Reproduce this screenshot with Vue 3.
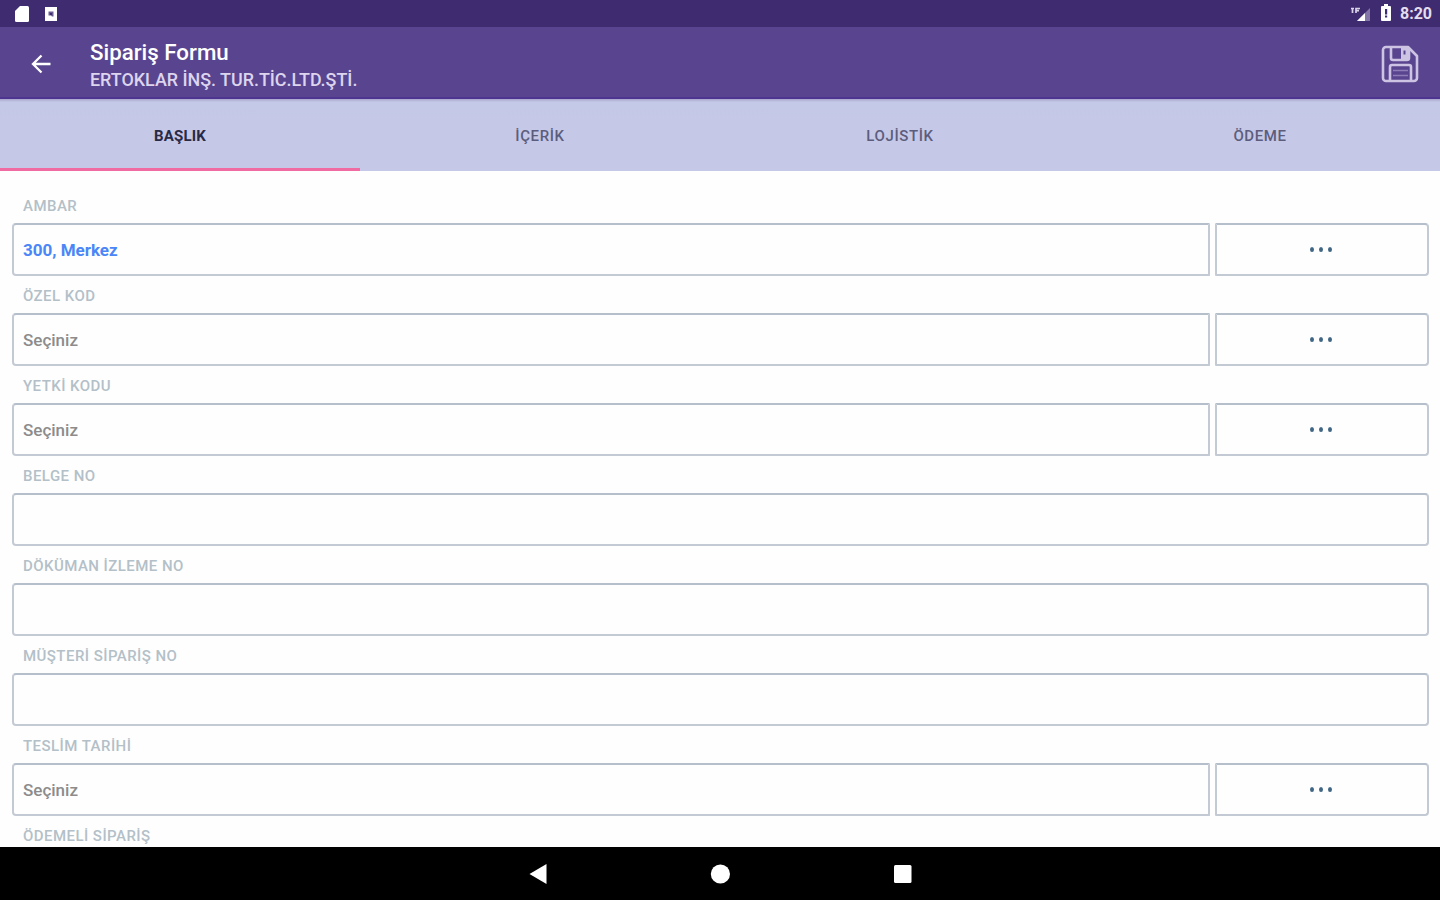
<template>
  <div class="screen">
    <div class="statusbar">
      <div class="status-left">
        <svg width="16" height="18" viewBox="0 0 16 18">
          <path d="M6 1h7.5a1.5 1.5 0 0 1 1.500 1.500v13a1.500 1.500 0 0 1-1.500 1.500h-11A1.500 1.500 0 0 1 1 15.500V6z" fill="#fff" />
        </svg>
        <svg width="14" height="18" viewBox="0 0 14 18">
          <path d="M1 2h12v14H1z" fill="#fff" />
          <path d="M4.500 6.500h5v5H8L7 10.500H4.500z" fill="#6b5c90" />
          <path d="M6 8h2v2H6z" fill="#3f2c70" />
        </svg>
      </div>
      <div class="status-right">
        <svg width="22" height="18" viewBox="0 0 22 18">
          <path d="M20 3v13H7z" fill="#8475a8" />
          <path d="M15 8v8H7z" fill="#fff" />
          <path d="M1 3.500h3M2.500 3.500V8M6 8V3.500h4M6 5.700h3" stroke="#d9d3e8" stroke-width="1.700" fill="none" />
        </svg>
        <svg class="battery" width="12" height="20" viewBox="0 0 12 20">
          <path d="M4 1h4v2h2a1 1 0 0 1 1 1v13a1 1 0 0 1-1 1H2a1 1 0 0 1-1-1V4a1 1 0 0 1 1-1h2z" fill="#fff" />
          <path d="M5 6h2.200v5.500H5zM5 12.500h2.200v2H5z" fill="#3f2c70" />
        </svg>
        <span class="clock">8:20</span>
      </div>
    </div>

    <header class="toolbar">
      <svg class="back" width="22" height="22" viewBox="0 0 22 22">
        <path d="M20.500 11H4M11.500 2.500L3 11l8.500 8.500" stroke="#fff" stroke-width="2.300" fill="none" />
      </svg>
      <div class="titles">
        <h1>Sipariş Formu</h1>
        <h2>ERTOKLAR İNŞ. TUR.TİC.LTD.ŞTİ.</h2>
      </div>
      <svg class="save" width="38" height="38" viewBox="0 0 38 38">
        <g fill="none" stroke="#cdc4e4" stroke-width="2.600" stroke-linejoin="round">
          <path d="M5 2h22l9 9v22a3 3 0 0 1-3 3H5a3 3 0 0 1-3-3V5a3 3 0 0 1 3-3z" />
          <path d="M10 3v10a2 2 0 0 0 2 2h14a2 2 0 0 0 2-2V3" />
          <path d="M9 35V22a2 2 0 0 1 2-2h17a2 2 0 0 1 2 2v13" />
          <path d="M12 25.500h15M12 30.500h15" stroke="#8d7db6" stroke-width="1.600" />
        </g>
        <path d="M20 3h7v11h-7z" fill="#cdc4e4" />
        <path d="M22.500 5.500h2v4h-2z" fill="#59458f" />
      </svg>
    </header>

    <nav class="tabs">
      <div
        v-for="(tab, index) in tabs"
        :key="tab"
        class="tab"
        :class="{ active: index === current }"
        @click="current = index"
      >
        {{ tab }}
      </div>
    </nav>

    <main class="form">
      <div class="field" v-for="field in fields" :key="field.label">
        <label>{{ field.label }}</label>
        <div class="row">
          <div class="box" :class="{ filled: field.filled, half: field.picker }">
            {{ field.value }}
          </div>
          <button v-if="field.picker" class="picker">
            <i></i><i></i><i></i>
          </button>
        </div>
      </div>
    </main>

    <footer class="navbar">
      <svg width="20" height="22" viewBox="0 0 20 22">
        <path d="M18.500 1v20L1.500 11z" fill="#fff" />
      </svg>
      <svg width="20" height="22" viewBox="0 0 20 22">
        <circle cx="10.400" cy="11" r="9.600" fill="#fff" />
      </svg>
      <svg width="20" height="22" viewBox="0 0 20 22">
        <rect x="2" y="2" width="17.500" height="18" rx="1.500" fill="#fff" />
      </svg>
    </footer>
  </div>
</template>

<script setup>
import { ref } from "vue";

const current = ref(0);
const tabs = ["BAŞLIK", "İÇERİK", "LOJİSTİK", "ÖDEME"];

const fields = [
  { label: "AMBAR", value: "300, Merkez", picker: true, filled: true },
  { label: "ÖZEL KOD", value: "Seçiniz", picker: true },
  { label: "YETKİ KODU", value: "Seçiniz", picker: true },
  { label: "BELGE NO", value: "" },
  { label: "DÖKÜMAN İZLEME NO", value: "" },
  { label: "MÜŞTERİ SİPARİŞ NO", value: "" },
  { label: "TESLİM TARİHİ", value: "Seçiniz", picker: true },
  { label: "ÖDEMELİ SİPARİŞ", value: "" },
];
</script>

<style>
body {
  margin: 0;
  overflow: hidden;
}
</style>

<style scoped>
.screen {
  width: 1440px;
  height: 900px;
  display: flex;
  flex-direction: column;
  background: #fefefe;
  font-family: Roboto, "Noto Sans", sans-serif;
  overflow: hidden;
}
.statusbar {
  flex: none;
  height: 27px;
  box-sizing: border-box;
  padding: 0 8px 0 14px;
  display: flex;
  align-items: center;
  justify-content: space-between;
  background: #3f2c70;
}
.status-left {
  display: flex;
  gap: 14px;
  padding-top: 1px;
}
.status-right {
  display: flex;
  align-items: center;
}
.battery {
  margin: 0 8px 1px 8px;
}
.clock {
  color: #e4deef;
  font-size: 16px;
  font-weight: 700;
  line-height: 28px;
}
.toolbar {
  flex: none;
  height: 72px;
  box-sizing: border-box;
  padding: 0 21px 0 30px;
  display: flex;
  align-items: center;
  background: #59458f;
  border-bottom: 2px solid #4e3590;
}
.back {
  margin-top: 3px;
}
.titles {
  flex: 1;
  margin-left: 38px;
  padding-top: 8px;
}
.titles h1 {
  margin: 0;
  color: #fff;
  font-size: 22.3px;
  font-weight: 500;
  line-height: 27px;
}
.titles h2 {
  margin: 0;
  color: #ddd5ee;
  font-size: 17.9px;
  font-weight: 500;
  line-height: 27px;
}
.save {
  margin-top: 4px;
}
.tabs {
  flex: none;
  height: 72px;
  display: flex;
  background: linear-gradient(#a9a6cc 0, #c3c9e6 3px, #c6c8e8 24px);
}
.tab {
  flex: 1;
  height: 72px;
  box-sizing: border-box;
  border-bottom: 3px solid transparent;
  text-align: center;
  line-height: 74px;
  font-size: 15px;
  font-weight: 500;
  letter-spacing: 0.6px;
  color: #5c5d7c;
}
.tab.active {
  color: #292a45;
  font-weight: 700;
  letter-spacing: 0.2px;
  border-color: #ef6ba2;
}
.form {
  flex: 1;
  min-height: 0;
  padding: 15px 11px 0 12px;
  overflow: hidden;
}
.field {
  height: 90px;
}
.field label {
  display: block;
  height: 37px;
  padding-left: 11px;
  line-height: 40px;
  font-size: 15px;
  letter-spacing: 0.45px;
  color: #b3c0c8;
  font-weight: 500;
}
.row {
  display: flex;
  gap: 5px;
}
.box,
.picker {
  height: 53px;
  box-sizing: border-box;
  border: 2px solid #c4cad4;
  border-top-color: #b4bfcb;
  border-radius: 4px;
  background: #fefefe;
}
.box {
  flex: 1;
  padding-left: 9px;
  line-height: 50px;
  font-size: 17px;
  font-weight: 500;
  color: #8c8c8c;
}
.box.half {
  border-radius: 4px 1px 1px 4px;
}
.box.filled {
  color: #4a86f7;
  font-weight: 700;
}
.picker {
  width: 214px;
  padding: 0 2px 0 0;
  display: flex;
  align-items: center;
  justify-content: center;
  gap: 5px;
  border-radius: 1px 4px 4px 1px;
}
.picker i {
  width: 4px;
  height: 5px;
  border-radius: 50%;
  background: #3f6684;
}
.navbar {
  flex: none;
  height: 53px;
  display: flex;
  align-items: center;
  justify-content: center;
  gap: 162px;
  background: #000;
}
</style>
